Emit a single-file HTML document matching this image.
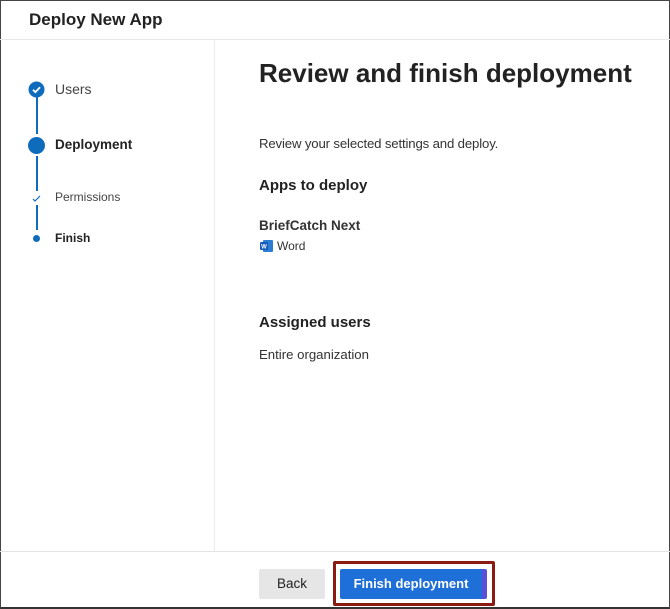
<!DOCTYPE html>
<html><head><style>
*{box-sizing:border-box;margin:0;padding:0}
body{width:670px;height:609px;background:#fff;font-family:"Segoe UI","Liberation Sans",sans-serif;color:#323130;position:relative;overflow:hidden}
.frame{position:absolute;left:0;top:0;width:670px;height:609px;border:1px solid #444;border-bottom:2px solid #333}
.hdr{position:absolute;left:0;top:0;width:670px;height:40px;border-bottom:1px solid #e8e8e8}
.hdr h1{position:absolute;left:29px;top:10px;font-size:17px;font-weight:bold;color:#222}
.left{position:absolute;left:214px;top:40px;width:1px;height:511px;background:#ececec}
.foot{position:absolute;left:0;top:551px;width:670px;height:1px;background:#e3e3e3}
.t{position:absolute;white-space:nowrap}
.line{position:absolute;left:36px;width:2px;background:#0f6cbd}
</style></head><body>
<div class="frame"></div>
<div class="hdr"><h1>Deploy New App</h1></div>
<div class="left"></div>
<div class="foot"></div>
<div class="line" style="top:97px;height:37px"></div>
<div class="line" style="top:156px;height:35px"></div>
<div class="line" style="top:205px;height:25px"></div>
<svg style="position:absolute;left:28px;top:81px" width="17" height="17"><circle cx="8.5" cy="8.5" r="8" fill="#0f6cbd"/><path d="M5 8.8l2.4 2.3L12 6.3" stroke="#fff" stroke-width="1.8" fill="none"/></svg>
<div style="position:absolute;left:28px;top:137px;width:17px;height:17px;border-radius:50%;background:#0f6cbd"></div>
<svg style="position:absolute;left:32px;top:194px" width="9" height="9"><path d="M1 5l2 2 5-5" stroke="#0f6cbd" stroke-width="1.2" fill="none"/></svg>
<div style="position:absolute;left:33px;top:235px;width:7px;height:7px;border-radius:50%;background:#0f6cbd"></div>
<div class="t" style="left:55px;top:81px;font-size:14px;color:#444">Users</div>
<div class="t" style="left:55px;top:137px;font-size:13.5px;font-weight:bold;color:#222">Deployment</div>
<div class="t" style="left:55px;top:190px;font-size:12px;color:#444">Permissions</div>
<div class="t" style="left:55px;top:231px;font-size:12px;font-weight:bold;color:#222">Finish</div>
<div class="t" style="left:259px;top:58px;font-size:26px;font-weight:bold;color:#222">Review and finish deployment</div>
<div class="t" style="left:259px;top:136px;font-size:13.2px;letter-spacing:-0.15px;color:#333">Review your selected settings and deploy.</div>
<div class="t" style="left:259px;top:177px;font-size:15px;font-weight:bold;color:#222">Apps to deploy</div>
<div class="t" style="left:259px;top:218px;font-size:13.5px;font-weight:bold;color:#333">BriefCatch Next</div>
<svg style="position:absolute;left:260px;top:240px" width="13" height="12"><rect x="3" y="0" width="10" height="12" rx="1" fill="#2b7cd3"/><rect x="0" y="2" width="8" height="8" rx="1" fill="#185abd"/><text x="4" y="8.5" font-size="6" fill="#fff" font-family="Liberation Sans" font-weight="bold" text-anchor="middle">W</text></svg>
<div class="t" style="left:277px;top:239px;font-size:12px;color:#333">Word</div>
<div class="t" style="left:259px;top:314px;font-size:15px;font-weight:bold;color:#222">Assigned users</div>
<div class="t" style="left:259px;top:347px;font-size:13.2px;color:#333">Entire organization</div>
<div style="position:absolute;left:259px;top:569px;width:66px;height:30px;background:#e6e6e6;border-radius:2px;font-size:13.5px;text-align:center;line-height:30px;color:#222">Back</div>
<div style="position:absolute;left:333px;top:561px;width:162px;height:45px;border:3px solid #8b1a12;border-radius:2px"></div>
<div style="position:absolute;left:340px;top:569px;width:147px;height:30px;background:#1f6fd8;border-right:5px solid #5b4fd6;border-radius:2px;font-size:13px;font-weight:bold;text-align:center;line-height:30px;color:#fff">Finish deployment</div>
</body></html>
